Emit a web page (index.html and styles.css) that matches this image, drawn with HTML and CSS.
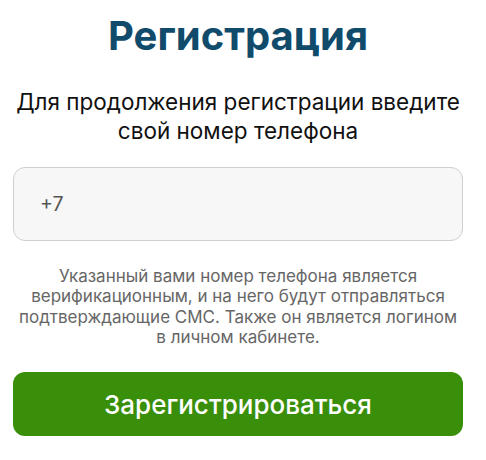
FILE: index.html
```html
<!DOCTYPE html>
<html lang="ru">
<head>
<meta charset="utf-8">
<link rel="stylesheet" href="styles.css">
</head>
<body>
<main class="reg">
  <h1 class="reg-title">Регистрация</h1>
  <p class="reg-lead">Для продолжения регистрации введите свой номер телефона</p>
  <div class="reg-field"><span class="reg-field-text">+7</span></div>
  <p class="reg-note">Указанный вами номер телефона является верификационным, и на него будут отправляться подтверждающие СМС. Также он является логином в личном кабинете.</p>
  <button class="reg-btn" type="button">Зарегистрироваться</button>
</main>
</body>
</html>
```
FILE: styles.css
```css
* { box-sizing: border-box; }
html, body { margin: 0; padding: 0; background: #fff; }
body { font-family: Inter, "Noto Sans", sans-serif; }
.reg {
  width: 463px;
  padding: 12px 0 0 13px;
  display: flex;
  flex-direction: column;
  align-items: stretch;
}
.reg-title {
  margin: 0;
  text-align: center;
  font-size: 40px;
  line-height: 48px;
  font-weight: 700;
  color: #114b6c;
}
.reg-lead {
  margin: 27px 0 0 0;
  text-align: center;
  font-size: 22.5px;
  line-height: 29px;
  color: #111;
}
.reg-field {
  margin-top: 22px;
  height: 74px;
  border: 1px solid #cfcfcf;
  border-radius: 12px;
  background: #f7f7f7;
  display: flex;
  align-items: center;
  padding-left: 26px;
}
.reg-field-text {
  font-size: 19.5px;
  color: #555;
}
.reg-note {
  margin: 25px 0 0 0;
  text-align: center;
  font-size: 17px;
  line-height: 20.3px;
  color: #666;
  font-weight: 400;
}
.reg-btn {
  margin-top: 25px;
  height: 64px;
  border: none;
  border-radius: 12px;
  background: #3a8f0a;
  color: #fff;
  font-family: Inter, "Noto Sans", sans-serif;
  font-size: 26px;
  font-weight: 500;
}
```
